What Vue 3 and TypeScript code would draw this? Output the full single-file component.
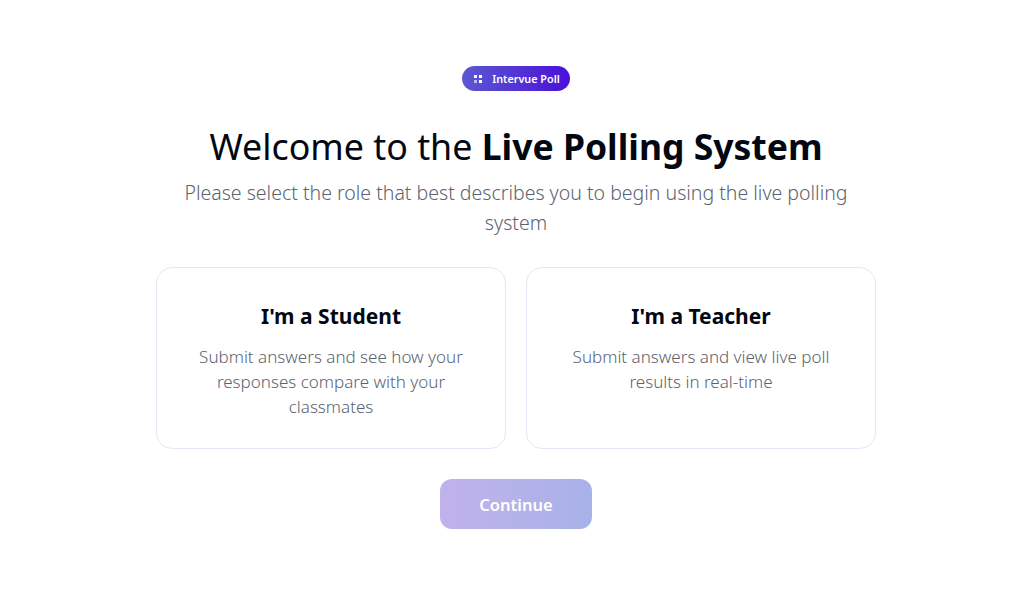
<script setup lang="ts">
interface Role { title: string; text: string }
const roles: Role[] = [
  { title: "I'm a Student", text: 'Submit answers and see how your responses compare with your classmates' },
  { title: "I'm a Teacher", text: 'Submit answers and view live poll results in real-time' },
]
</script>

<template>
  <main class="page">
    <div class="badge">
      <svg class="badge-icon" width="10" height="10" viewBox="0 0 10 10" aria-hidden="true">
        <rect x="1" y="1" width="3" height="3" fill="#fff" />
        <rect x="6" y="1" width="3" height="3" fill="#fff" />
        <rect x="1" y="6" width="3" height="3" fill="#fff" opacity="0.6" />
        <rect x="6" y="6" width="3" height="3" fill="#fff" />
      </svg>
      <span>Intervue Poll</span>
    </div>
    <h1>Welcome to the <strong>Live Polling System</strong></h1>
    <p class="sub">Please select the role that best describes you to begin using the live polling system</p>
    <div class="cards">
      <div v-for="r in roles" :key="r.title" class="card">
        <h2>{{ r.title }}</h2>
        <p>{{ r.text }}</p>
      </div>
    </div>
    <button class="cta" type="button" disabled>Continue</button>
  </main>
</template>

<style>
html, body { margin: 0; background: #fff; }
</style>

<style scoped>
.page {
  width: 1011px;
  height: 592px;
  box-sizing: border-box;
  padding-top: 66px;
  padding-left: 21px;
  display: flex;
  flex-direction: column;
  align-items: center;
  overflow: hidden;
  font-family: "Noto Sans", "Open Sans", sans-serif;
}
.badge {
  display: flex;
  align-items: center;
  gap: 9px;
  height: 25px;
  padding: 0 10px 0 11px;
  border-radius: 13px;
  background: linear-gradient(90deg, #5c58d2, #4a10d8);
  color: #fff;
  font-size: 10.8px;
  font-weight: 600;
}
h1 {
  margin: 30px 0 0;
  font-size: 35.8px;
  line-height: 50px;
  font-weight: 400;
  color: #030712;
}
h1 strong { font-weight: 700; font-size: 35.5px; line-height: 1; }
.sub {
  margin: 7px 0 0;
  width: 700px;
  font-size: 19.5px;
  font-weight: 300;
  line-height: 30px;
  color: #5c6370;
  text-align: center;
}
.cards {
  margin-top: 29px;
  display: flex;
  gap: 20px;
}
.card {
  width: 350px;
  height: 182px;
  box-sizing: border-box;
  padding: 32px 40px 0;
  background: #fff;
  border: 1px solid #e2e8f5;
  border-radius: 16px;
  text-align: center;
}
h2 {
  margin: 0;
  font-size: 21px;
  line-height: 32px;
  font-weight: 700;
  color: #030712;
}
.card p {
  margin: 12px -8px 0;
  font-size: 17px;
  font-weight: 300;
  line-height: 25px;
  color: #5c6370;
}
.cta {
  margin-top: 30px;
  width: 152px;
  height: 50px;
  padding: 0;
  border: 0;
  border-radius: 12px;
  background: linear-gradient(90deg, #c0b2ec, #a8b2e8);
  color: #fff;
  font-family: inherit;
  font-size: 16.5px;
  font-weight: 600;
}
</style>
